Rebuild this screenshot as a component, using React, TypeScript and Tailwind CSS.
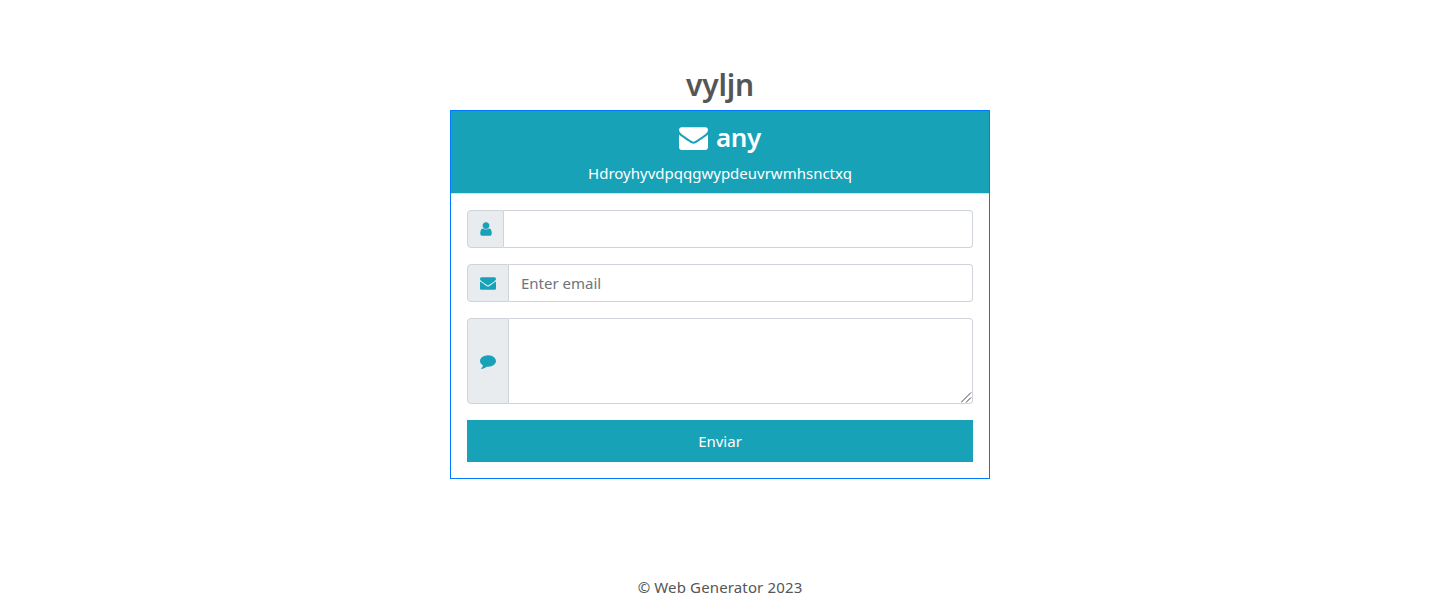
const ENVELOPE =
  "M1792 710v794q0 66-47 113t-113 47h-1472q-66 0-113-47t-47-113v-794q44 49 101 87 362 246 497 345 57 42 92.500 65.500t94.500 48 110 24.500h2q51 0 110-24.500t94.500-48 92.500-65.500q170-123 498-345 57-39 100-87zm0-294q0 79-49 151t-122 123q-376 261-468 325-10 7-42.500 30.500t-54 38-52 32.500-57.500 27-50 9h-2q-23 0-50-9t-57.500-27-52-32.500-54-38-42.500-30.500q-91-64-262-182.500t-205-142.500q-62-42-117-115.500t-55-136.500q0-78 41.500-130t118.500-52h1472q65 0 112.500 47t47.500 113z";
const USER =
  "M1536 1399q0 109-62.500 187t-150.500 78h-854q-88 0-150.500-78t-62.500-187q0-85 8.500-160.500t31.500-152 58.500-131 94-89 134.500-34.500q131 128 313 128t313-128q76 0 134.500 34.500t94 89 58.500 131 31.500 152 8.500 160.500zm-256-887q0 159-112.500 271.500t-271.500 112.500-271.500-112.500-112.500-271.500 112.500-271.500 271.500-112.500 271.500 112.500 112.500 271.500z";
const COMMENT =
  "M1792 896q0 174-120 321.500t-326 233-450 85.500q-70 0-145-8-198 175-460 242-49 14-114 22-17 2-30.500-9t-17.500-29v-1q-3-4-.5-12t2-10 4.500-9.500l6-9 7-8.500 8-9q7-8 31-34.500t34.500-38 31-39.500 32.500-51 27-59 26-76q-157-89-247.500-220t-90.500-281q0-130 71-248.500t191-204.500 286-136.500 348-50.500q244 0 450 85.500t326 233 120 321.500z";

function Icon({ path, className }: { path: string; className: string }) {
  return (
    <svg viewBox="0 0 1792 1792" fill="currentColor" className={className} aria-hidden="true">
      <path d={path} />
    </svg>
  );
}

const addon = "flex items-center justify-center rounded-l border border-[#ced4da] bg-[#e9ecef] text-[#17a2b8]";
const field = "min-w-0 flex-1 rounded-r border border-l-0 border-[#ced4da] px-3 outline-none";

export default function App() {
  return (
    <div className="flex h-[599px] flex-col items-center overflow-hidden bg-white font-['Noto_Sans',sans-serif] text-[15px] leading-6 text-[#212529]">
      <h1 className="mt-[66px] h-[44px] shrink-0 text-[30px] leading-[37px] font-semibold tracking-[-0.2px] text-[#555]">vyljn</h1>
      <main className="h-[369px] w-[540px] shrink-0 border border-[#007bff]">
        <header className="flex h-[83px] flex-col items-center border-b border-[#dfdfdf] bg-[#17a2b8] pt-2 text-white">
          <h2 className="flex h-[42px] items-start gap-[8px] text-[26px] leading-[36px] font-semibold tracking-[-0.4px]">
            <Icon path={ENVELOPE} className="mt-[4px] size-[29px]" />
            <span>any</span>
          </h2>
          <p>Hdroyhyvdpqqgwypdeuvrwmhsnctxq</p>
        </header>
        <form className="flex flex-col gap-4 p-4">
          <div className="flex h-[38px]">
            <span className={`w-[37px] ${addon}`}><Icon path={USER} className="size-4" /></span>
            <input aria-label="Name" className={field} />
          </div>
          <div className="flex h-[38px]">
            <span className={`w-[42px] ${addon}`}><Icon path={ENVELOPE} className="size-4" /></span>
            <input placeholder="Enter email" className={`${field} placeholder:text-[#6c757d]`} />
          </div>
          <div className="relative flex h-[86px]">
            <span className={`w-[42px] ${addon}`}><Icon path={COMMENT} className="size-4" /></span>
            <textarea aria-label="Message" className={`${field} resize-none`} />
            <svg viewBox="0 0 11 11" className="absolute right-[1px] bottom-[1px] size-[11px]" fill="none" stroke="#444" strokeWidth="1">
              <path d="M0 10.500L10 .5M5 10.500L10 5.500" />
            </svg>
          </div>
          <button type="button" className="h-[42px] bg-[#17a2b8] pb-px text-white">Enviar</button>
        </form>
      </main>
      <footer className="mt-[96px] shrink-0 tracking-[0.14px] text-[#555]">© Web Generator 2023</footer>
    </div>
  );
}
